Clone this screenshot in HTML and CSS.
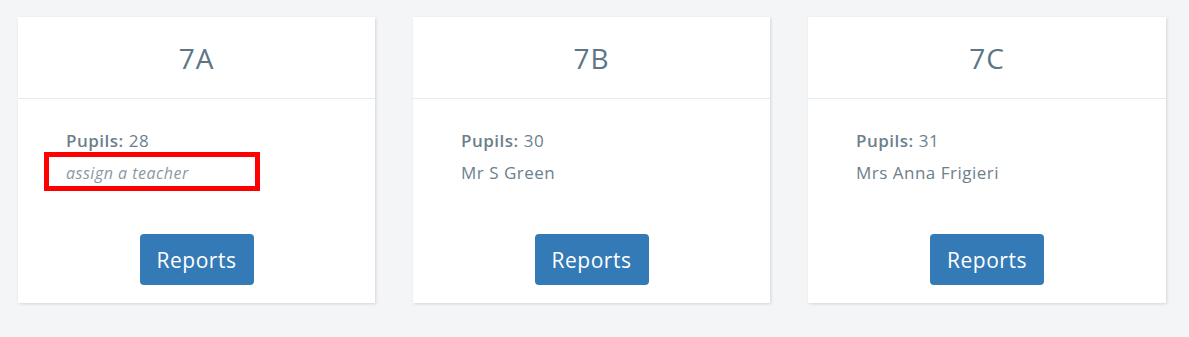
FILE: index.html
```html
<!DOCTYPE html>
<html>
<head>
<meta charset="utf-8">
<link rel="stylesheet" href="styles.css">
</head>
<body>
<div class="grid">
  <div class="card">
    <div class="card-head">7A</div>
    <div class="card-body">
      <div class="info"><b>Pupils:</b> 28</div>
      <div class="teacher-wrap">
        <div class="info assign">assign a teacher</div>
        <div class="highlight"></div>
      </div>
      <div class="actions"><a class="btn">Reports</a></div>
    </div>
  </div>
  <div class="card">
    <div class="card-head">7B</div>
    <div class="card-body">
      <div class="info"><b>Pupils:</b> 30</div>
      <div class="teacher-wrap"><div class="info">Mr S Green</div></div>
      <div class="actions"><a class="btn">Reports</a></div>
    </div>
  </div>
  <div class="card">
    <div class="card-head">7C</div>
    <div class="card-body">
      <div class="info"><b>Pupils:</b> 31</div>
      <div class="teacher-wrap"><div class="info">Mrs Anna Frigieri</div></div>
      <div class="actions"><a class="btn">Reports</a></div>
    </div>
  </div>
</div>
</body>
</html>
```
FILE: styles.css
```css
html, body { margin: 0; padding: 0; }
body {
  background: #f4f5f7;
  font-family: "Open Sans", "DejaVu Sans", sans-serif;
  color: #6d7f8c;
  width: 1189px;
  height: 337px;
}
.grid {
  display: grid;
  grid-template-columns: 357px 357px 358px;
  column-gap: 38px;
  padding: 17px 0 0 18px;
}
.card {
  background: #fff;
  height: 286px;
  box-shadow: 1px 1px 3px rgba(0,0,0,0.13);
  display: flex;
  flex-direction: column;
}
.card-head {
  height: 81px;
  border-bottom: 1px solid #e8ebee;
  display: flex;
  align-items: center;
  justify-content: center;
  font-size: 28px;
  letter-spacing: 1px;
  color: #5d7584;
}
.card-body {
  padding: 26px 0 0 48px;
  position: relative;
  flex: 1;
}
.info {
  font-size: 17px;
  letter-spacing: 0.5px;
  line-height: 32px;
}
.info b { font-weight: 600; }
.teacher-wrap { position: relative; }
.assign {
  font-style: italic;
  font-size: 16px;
  letter-spacing: 0.5px;
  color: #8a98a2;
}
.highlight {
  position: absolute;
  left: -22px;
  top: -5px;
  width: 206px;
  height: 29px;
  border: 5px solid #ff0000;
}
.actions {
  position: absolute;
  left: 0;
  right: 0;
  top: 135px;
  display: flex;
  justify-content: center;
}
.btn {
  display: flex;
  align-items: center;
  justify-content: center;
  width: 114px;
  height: 51px;
  box-sizing: border-box;
  background: #337ab7;
  border-radius: 4px;
  color: #fff;
  font-size: 21px;
  letter-spacing: 0.5px;
}
```
